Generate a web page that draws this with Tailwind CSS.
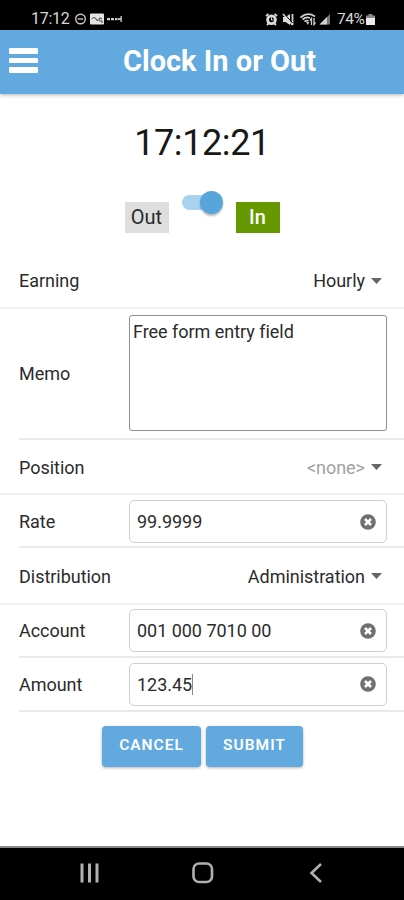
<!DOCTYPE html>
<html lang="en">
<head>
    <meta charset="UTF-8">
    <meta name="viewport" content="width=device-width, initial-scale=1.0">
    <title>Clock In or Out</title>
    <script src="https://cdn.jsdelivr.net/npm/@tailwindcss/browser@4"></script>
</head>
<body class="bg-white font-[Roboto,sans-serif] text-[#2b2b2b]">
    <div class="w-[404px] h-[900px] flex flex-col overflow-hidden">

        <!-- Status bar -->
        <div class="h-[30px] shrink-0 bg-black text-[#d8d8d8] flex items-center justify-between pt-[8px] pl-[31px] pr-[29px]">
            <div class="flex items-center">
                <span class="text-[16px] leading-4 w-[43px] tracking-[-0.3px]">17:12</span>
                <svg class="w-[13px] h-[12px]" viewBox="0 0 13 12" fill="none" stroke="#c8c8c8" stroke-width="1.4">
                    <circle cx="6.5" cy="6" r="4.8"/>
                    <path d="M3.8 6h5.4"/>
                </svg>
                <svg class="ml-[3px] w-[15px] h-[12px]" viewBox="0 0 15 12">
                    <rect x="0" y="0.5" width="14" height="11" rx="1" fill="#e4e4e4"/>
                    <path d="M2 6q2-3 4 0t4-1l2 1M9 8h3v2" fill="none" stroke="#555" stroke-width="1.2"/>
                </svg>
                <svg class="ml-[2px] w-[16px] h-[12px]" viewBox="0 0 16 12" fill="#cfcfcf">
                    <path d="M0 5h3v2.200H0zM4 5h3v2.200H4zM8 5h2.500v2.200H8zM11 5.300h3v1.600h-3zM13.500 3h1.300v6h-1.300z"/>
                </svg>
            </div>
            <div class="flex items-center">
                <svg class="w-[13px] h-[13px]" viewBox="0 0 13 13" fill="none" stroke="#dcdcdc">
                    <circle cx="6.500" cy="6.800" r="3.900" stroke-width="2.800"/>
                    <path d="M1 3l2.500-2M12 3L9.500 1M2 12l1.500-1.500M11 12l-1.500-1.500" stroke-width="1.800"/>
                    <path d="M6.500 4.500v2.500h2" stroke-width="1"/>
                </svg>
                <svg class="ml-[4px] w-[13px] h-[13px]" viewBox="0 0 13 13">
                    <path d="M1 4h2.500L8 1v11L3.500 9H1z" fill="#dcdcdc"/>
                    <path d="M10.500 1v11" stroke="#cfcfcf" stroke-width="1.800"/>
                    <path d="M2.500 1l8 9" stroke="#000" stroke-width="1"/>
                    <path d="M1 1l9.500 11" stroke="#dcdcdc" stroke-width="1.600"/>
                </svg>
                <svg class="ml-[5px] w-[16px] h-[13px]" viewBox="0 0 16 13" fill="none" stroke="#cfcfcf" stroke-width="1.700">
                    <path d="M0.500 4.500Q7.500-1.500 15 3.500M2.500 6.500Q6.500 3 10 5M4.500 8.500q2-1.500 4-.500"/>
                    <path d="M6 9h3l-1 3z" fill="#cfcfcf" stroke="none"/>
                    <path d="M11.500 12V5.500l-1.500 2M14 5v6.500l1.500-2" stroke-width="1.300"/>
                </svg>
                <svg class="ml-[3px] w-[12px] h-[12px]" viewBox="0 0 12 12">
                    <path d="M0.500 11.500L11 1v10.500z" fill="#777"/>
                    <path d="M0.500 11.500L8 4v7.500z" fill="#cfcfcf"/>
                </svg>
                <span class="ml-[6px] w-[29px] text-[15.500px] leading-4 tracking-[-0.5px]">74%</span>
                <svg class="w-[9px] h-[13px]" viewBox="0 0 9 13">
                    <path d="M2.500 1h4v1.500H9V12H0V2.500h2.500z" fill="#888"/>
                    <path d="M0 5h9v7H0z" fill="#ececec"/>
                </svg>
            </div>
        </div>

        <!-- App header -->
        <header class="h-[64px] shrink-0 bg-[#61a9de] flex items-center px-[9px] shadow-[0_1px_4px_rgba(0,0,0,0.3)]">
            <div class="w-[29px] flex flex-col gap-[4px] pb-[3px]">
                <div class="h-[6px] bg-white rounded-[1px]"></div>
                <div class="h-[5px] bg-white rounded-[1px]"></div>
                <div class="h-[6px] bg-white rounded-[1px]"></div>
            </div>
            <h1 class="flex-1 pl-[14px] pr-[8px] text-center text-white text-[29px] font-bold whitespace-nowrap">Clock In or Out</h1>
        </header>

        <!-- Clock and toggle -->
        <div class="h-[158px] shrink-0 flex flex-col items-center pt-[29px]">
            <div class="text-[36px] leading-[40px] tracking-[-0.4px] text-[#181818]">17:12:21</div>
            <div class="mt-[28px] flex items-start">
                <div class="mt-[11px] w-[44px] h-[31px] bg-[#dedede] text-[20px] leading-[31px] text-center">Out</div>
                <div class="relative ml-[13px] w-[40px] h-[24px]">
                    <div class="absolute left-0 top-[4px] w-[36px] h-[15px] rounded-full bg-[#a9d2ef]"></div>
                    <div class="absolute left-[18px] top-0 w-[23px] h-[23px] rounded-full bg-[#58a5dc] shadow-[0_2px_2px_rgba(0,0,0,0.25)]"></div>
                </div>
                <div class="mt-[11px] ml-[14px] w-[44px] h-[31px] bg-[#669900] text-white text-[20px] font-medium leading-[31px] text-center">In</div>
            </div>
        </div>

        <!-- Form -->
        <div class="shrink-0 text-[18px] tracking-[-0.03px]">
            <div class="h-[57px] pt-[2px] pl-[19px] pr-[22px] flex items-center justify-between border-b-2 border-[#f1f1f1]">
                <span>Earning</span>
                <span class="flex items-center gap-[6px]">Hourly
                    <svg class="w-[11px] h-[6px]" viewBox="0 0 11 6"><path d="M0 0h11L5.500 6z" fill="#666"/></svg>
                </span>
            </div>
            <div class="h-[131px] ml-[19px] pr-[17px] pb-px flex items-center border-b-2 border-[#e9e9e9]">
                <span class="w-[110px]">Memo</span>
                <div class="flex-1 h-[116px] border border-[#8e8e8e] rounded-[3px] px-[3px] pt-[2px]">Free form entry field</div>
            </div>
            <div class="h-[55px] pt-px pl-[19px] pr-[22px] flex items-center justify-between border-b-2 border-[#f1f1f1]">
                <span>Position</span>
                <span class="flex items-center gap-[6px] text-[#a2a2a2]">&lt;none&gt;
                    <svg class="w-[11px] h-[6px]" viewBox="0 0 11 6"><path d="M0 0h11L5.500 6z" fill="#666"/></svg>
                </span>
            </div>
            <div class="h-[53px] pt-[2px] ml-[19px] pr-[17px] flex items-center border-b-2 border-[#e9e9e9]">
                <span class="w-[110px]">Rate</span>
                <div class="flex-1 h-[43px] border border-[#cfcfcf] rounded-[5px] pl-[7px] pr-[10px] flex items-center justify-between">
                    <span>99.9999</span>
                    <svg class="w-[16px] h-[16px]" viewBox="0 0 16 16"><circle cx="8" cy="8" r="7.800" fill="#707070"/><path d="M5 5l6 6M11 5l-6 6" stroke="#fff" stroke-width="2.600"/></svg>
                </div>
            </div>
            <div class="h-[57px] pt-px pl-[19px] pr-[22px] flex items-center justify-between border-b-2 border-[#f1f1f1]">
                <span>Distribution</span>
                <span class="flex items-center gap-[6px]">Administration
                    <svg class="w-[11px] h-[6px]" viewBox="0 0 11 6"><path d="M0 0h11L5.500 6z" fill="#666"/></svg>
                </span>
            </div>
            <div class="h-[53px] ml-[19px] pr-[17px] flex items-center border-b-2 border-[#e9e9e9]">
                <span class="w-[110px]">Account</span>
                <div class="flex-1 h-[43px] border border-[#cfcfcf] rounded-[5px] pl-[7px] pr-[10px] flex items-center justify-between">
                    <span>001 000 7010 00</span>
                    <svg class="w-[16px] h-[16px]" viewBox="0 0 16 16"><circle cx="8" cy="8" r="7.800" fill="#707070"/><path d="M5 5l6 6M11 5l-6 6" stroke="#fff" stroke-width="2.600"/></svg>
                </div>
            </div>
            <div class="h-[54px] ml-[19px] pr-[17px] flex items-center border-b-2 border-[#e9e9e9]">
                <span class="w-[110px]">Amount</span>
                <div class="flex-1 h-[43px] border border-[#cfcfcf] rounded-[5px] pl-[7px] pr-[10px] flex items-center justify-between">
                    <span class="flex items-center">123.45<span class="w-px h-[21px] bg-[#888]"></span></span>
                    <svg class="w-[16px] h-[16px]" viewBox="0 0 16 16"><circle cx="8" cy="8" r="7.800" fill="#707070"/><path d="M5 5l6 6M11 5l-6 6" stroke="#fff" stroke-width="2.600"/></svg>
                </div>
            </div>
        </div>

        <!-- Actions -->
        <div class="flex-1 pt-[14px] pl-[102px] flex items-start gap-[5px]">
            <button class="w-[99px] h-[41px] pb-[2px] rounded-[4px] bg-[#61a9de] text-white text-[15.500px] font-semibold tracking-[1px] shadow-[0_1px_3px_rgba(0,0,0,0.3)]">CANCEL</button>
            <button class="w-[97px] h-[41px] pb-[2px] rounded-[4px] bg-[#61a9de] text-white text-[15.500px] font-semibold tracking-[1px] shadow-[0_1px_3px_rgba(0,0,0,0.3)]">SUBMIT</button>
        </div>

        <!-- Navigation bar -->
        <div class="h-[54px] shrink-0 bg-black border-t-2 border-[#888] flex items-center pb-[3px] pl-[80px]">
            <svg class="w-[19px] h-[20px]" viewBox="0 0 19 20" stroke="#b0b0b0" stroke-width="3"><path d="M2 0.500v19M9.500 0.500v19M17 0.500v19"/></svg>
            <svg class="ml-[93px] w-[22px] h-[22px]" viewBox="0 0 22 22" fill="none" stroke="#b0b0b0" stroke-width="2.600"><rect x="1.500" y="1.500" width="18.500" height="18.500" rx="5.500"/></svg>
            <svg class="ml-[95px] w-[14px] h-[20px]" viewBox="0 0 14 20" fill="none" stroke="#b0b0b0" stroke-width="2.600"><path d="M12 1L2.500 10l9.500 9"/></svg>
        </div>
    </div>
</body>
</html>
